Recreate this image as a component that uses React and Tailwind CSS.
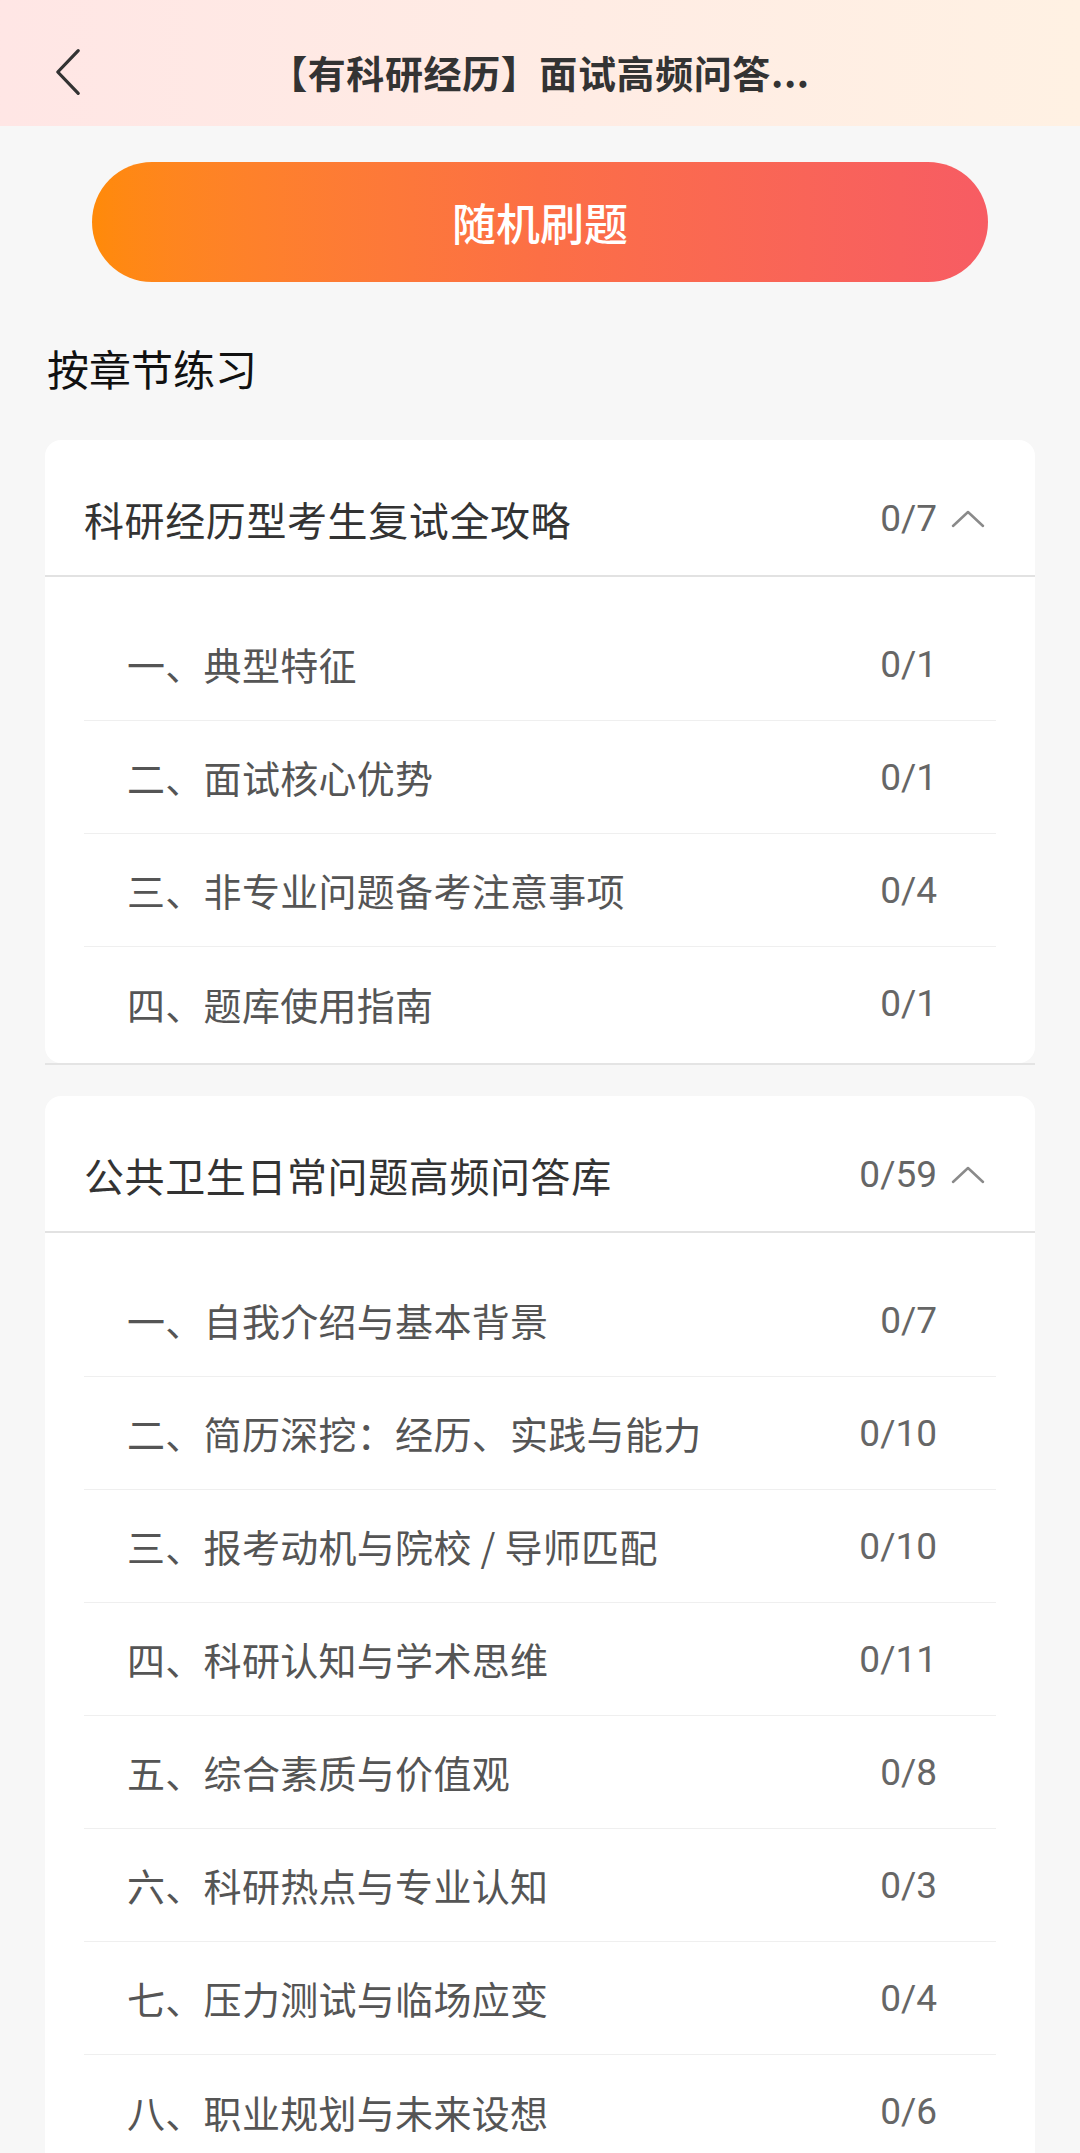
import React from "react";

const FONT = { fontFamily: '"Noto Sans CJK SC", "Noto Sans", sans-serif' };
const NUM = { fontFamily: 'Roboto, "Noto Sans", sans-serif' };

const sections = [
  {
    title: "科研经历型考生复试全攻略",
    count: "0/7",
    rows: [
      ["一、典型特征", "0/1"],
      ["二、面试核心优势", "0/1"],
      ["三、非专业问题备考注意事项", "0/4"],
      ["四、题库使用指南", "0/1"],
    ],
  },
  {
    title: "公共卫生日常问题高频问答库",
    count: "0/59",
    rows: [
      ["一、自我介绍与基本背景", "0/7"],
      ["二、简历深挖：经历、实践与能力", "0/10"],
      ["三、报考动机与院校 / 导师匹配", "0/10"],
      ["四、科研认知与学术思维", "0/11"],
      ["五、综合素质与价值观", "0/8"],
      ["六、科研热点与专业认知", "0/3"],
      ["七、压力测试与临场应变", "0/4"],
      ["八、职业规划与未来设想", "0/6"],
    ],
  },
];

function ChevronUp() {
  return (
    <svg width="34" height="18" viewBox="0 0 34 18" fill="none">
      <polyline points="2,16 17,2 32,16" stroke="#8a8a8a" strokeWidth="2.5" strokeLinecap="round" strokeLinejoin="round" />
    </svg>
  );
}

function Section({ s, last }) {
  return (
    <div className={`mx-[45px] border-b-2 border-[#e4e4e4] ${last ? "" : "mb-[31px]"}`}>
      <div className="bg-white rounded-[16px]">
        <div className="h-[137px] pt-[22px] pl-[39px] pr-[50px] flex items-center border-b-2 border-[#e2e2e2]">
          <div className="flex-1 text-[40px] leading-none tracking-[0.6px] text-[#333333]">{s.title}</div>
          <div className="text-[37px] leading-none text-[#666666]" style={NUM}>{s.count}</div>
          <div className="ml-[14px] flex items-center">
            <ChevronUp />
          </div>
        </div>
        <div className="px-[39px] pt-[31px] pb-[3px]">
          {s.rows.map(([t, n], i) => (
            <div
              key={i}
              className={`h-[113px] flex items-center pl-[43px] pr-[59px] ${i < s.rows.length - 1 ? "border-b border-[#efefef]" : ""}`}
            >
              <div className="flex-1 text-[38px] leading-none tracking-[0.3px] text-[#555555]">{t}</div>
              <div className="text-[37px] leading-none text-[#666666]" style={NUM}>{n}</div>
            </div>
          ))}
        </div>
      </div>
    </div>
  );
}

export default function App() {
  return (
    <div className="w-[1080px] min-h-[2153px] bg-[#f7f7f7] overflow-hidden" style={FONT}>
      <div className="h-[126px] pt-[18px] flex items-center bg-gradient-to-r from-[#ffe6e5] to-[#fff1e3]">
        <div className="pl-[55px] w-[26px] box-content flex items-center">
          <svg width="28" height="50" viewBox="0 0 28 50" fill="none">
            <polyline points="25,2 3,25 25,48" stroke="#333333" strokeWidth="3.5" strokeLinecap="round" strokeLinejoin="round" />
          </svg>
        </div>
        <div className="flex-1 text-center text-[38px] leading-none font-bold text-[#333333] tracking-[0.6px]">
          【有科研经历】面试高频问答...
        </div>
        <div className="w-[82px]" />
      </div>

      <div className="mt-[36px] mx-[92px] h-[120px] rounded-full bg-gradient-to-r from-[#ff8a08] via-[#fc6f45] to-[#f75c63] flex items-center justify-center">
        <span className="text-white text-[44px] leading-none font-medium">随机刷题</span>
      </div>

      <div className="mt-[65px] mb-[51px] pl-[47px] text-[42px] leading-[42px] text-[#111111]">按章节练习</div>

      {sections.map((s, i) => (
        <Section key={i} s={s} last={i === sections.length - 1} />
      ))}
    </div>
  );
}
